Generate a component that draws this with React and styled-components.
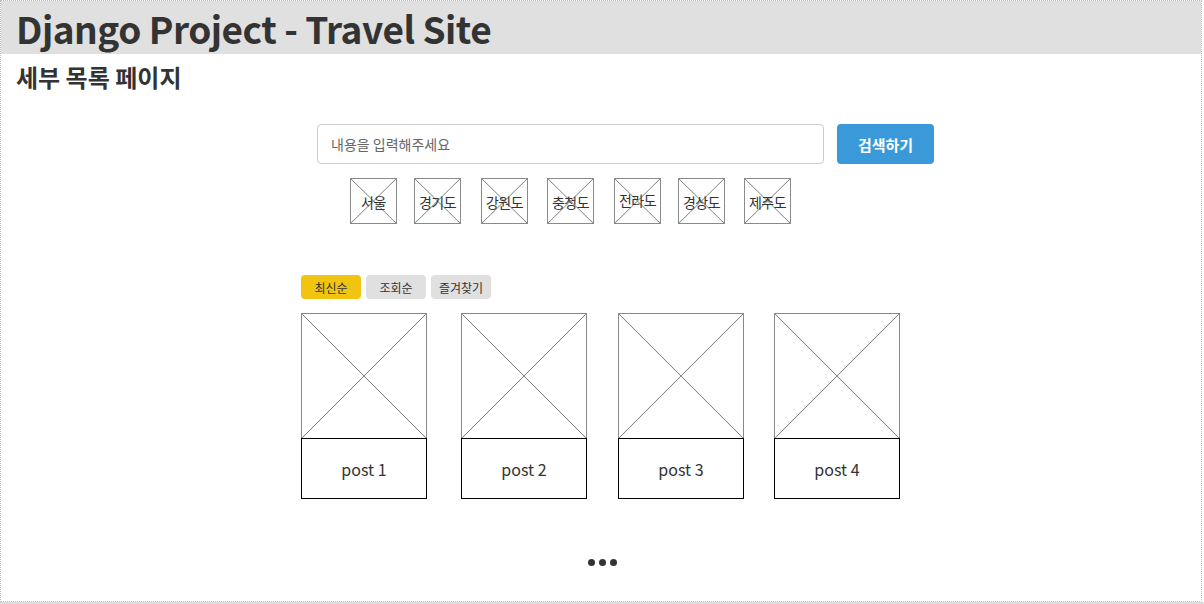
import { createGlobalStyle } from "styled-components";
import styled from "styled-components";

const GlobalStyle = createGlobalStyle`
  html, body {
    margin: 0;
    padding: 0;
    background: #fff;
  }
  body {
    font-family: "Noto Sans CJK KR", "Noto Sans", sans-serif;
    color: #333;
  }
`;

const cross = `
  linear-gradient(to top right, transparent calc(50% - 0.8px), #8a8a8a 50%, transparent calc(50% + 0.8px)),
  linear-gradient(to bottom right, transparent calc(50% - 0.8px), #8a8a8a 50%, transparent calc(50% + 0.8px))
`;

const Frame = styled.div`
  width: 1200px;
  height: 600px;
  border: 1px dotted #bdbdbd;
  overflow: hidden;
`;

const Header = styled.div`
  height: 53px;
  background-color: #e0e0e0;
  display: flex;
  align-items: center;
  padding-left: 15px;
`;

const Title = styled.h1`
  margin: 0;
  font-size: 37px;
  font-weight: 700;
  color: #333;
  letter-spacing: -0.5px;
`;

const SubTitle = styled.h2`
  margin: 0;
  padding: 6px 0 0 15px;
  font-size: 24px;
  font-weight: 700;
  line-height: 34px;
  color: #333;
`;

const Row = styled.div`
  display: flex;
  align-items: ${(p) => p.align || "flex-start"};
  gap: ${(p) => p.gap || 0}px;
  padding-left: ${(p) => p.left || 0}px;
  margin-top: ${(p) => p.top || 0}px;
`;

const SearchInput = styled.input`
  box-sizing: border-box;
  width: 507px;
  height: 40px;
  border: 1px solid #ccc;
  border-radius: 4px;
  padding: 0 13px;
  font-family: inherit;
  font-size: 14px;
  color: #333;
  outline: none;
  &::placeholder {
    color: #666;
  }
`;

const SearchButton = styled.button`
  width: 97px;
  height: 40px;
  border: none;
  border-radius: 4px;
  background-color: #3a9ad9;
  color: #fff;
  font-family: inherit;
  font-size: 15px;
  font-weight: 700;
  cursor: pointer;
`;

const RegionBox = styled.div`
  box-sizing: border-box;
  width: 47px;
  height: 46px;
  border: 1px solid #8a8a8a;
  background-image: ${cross};
  display: flex;
  align-items: center;
  justify-content: center;
  padding-top: ${(p) => (p.high ? 0 : 2)}px;
  padding-bottom: ${(p) => (p.high ? 3 : 0)}px;
  font-size: 14px;
  color: #333;
  white-space: nowrap;
  letter-spacing: -0.5px;
`;

const SortButton = styled.button`
  width: 60px;
  height: 24px;
  border: none;
  border-radius: 4px;
  background-color: ${(p) => (p.active ? "#f1c40f" : "#e0e0e0")};
  color: #333;
  font-family: inherit;
  font-size: 12px;
  padding: 0;
  cursor: pointer;
`;

const Card = styled.div`
  display: flex;
  flex-direction: column;
  width: 126px;
`;

const Thumb = styled.div`
  box-sizing: border-box;
  width: 126px;
  height: 125px;
  border: 1px solid #8a8a8a;
  border-bottom: none;
  background-image: ${cross};
`;

const PostLabel = styled.div`
  box-sizing: border-box;
  width: 126px;
  height: 61px;
  border: 1px solid #000;
  display: flex;
  align-items: center;
  justify-content: center;
  font-size: 16px;
  color: #333;
`;

const Dots = styled.div`
  display: flex;
  justify-content: center;
  gap: 4px;
  margin-top: 60px;
  padding-left: 2px;
`;

const Dot = styled.span`
  width: 7px;
  height: 7px;
  border-radius: 50%;
  background-color: #333;
`;

const BottomBar = styled.div`
  height: 2px;
  background-color: #ddd;
`;

const regions = [
  { name: "서울", gap: 17 },
  { name: "경기도", gap: 20 },
  { name: "강원도", gap: 19 },
  { name: "충청도", gap: 20 },
  { name: "전라도", gap: 17, high: true },
  { name: "경상도", gap: 19 },
  { name: "제주도", gap: 0 },
];

const cardGaps = [34, 31, 30, 0];

function App() {
  return (
    <>
      <GlobalStyle />
      <Frame>
        <Header>
          <Title>Django Project - Travel Site</Title>
        </Header>
        <SubTitle>세부 목록 페이지</SubTitle>

        <Row left={316} top={30} gap={13}>
          <SearchInput placeholder="내용을 입력해주세요" />
          <SearchButton>검색하기</SearchButton>
        </Row>

        <Row left={349} top={14}>
          {regions.map((r) => (
            <RegionBox
              key={r.name}
              high={r.high}
              style={{ marginRight: r.gap }}
            >
              {r.name}
            </RegionBox>
          ))}
        </Row>

        <Row left={300} top={51} gap={5}>
          <SortButton active>최신순</SortButton>
          <SortButton>조회순</SortButton>
          <SortButton>즐겨찾기</SortButton>
        </Row>

        <Row left={300} top={14}>
          {cardGaps.map((g, i) => (
            <Card key={i} style={{ marginRight: g }}>
              <Thumb />
              <PostLabel>post {i + 1}</PostLabel>
            </Card>
          ))}
        </Row>

        <Dots>
          <Dot />
          <Dot />
          <Dot />
        </Dots>
      </Frame>
      <BottomBar />
    </>
  );
}

export default App;
